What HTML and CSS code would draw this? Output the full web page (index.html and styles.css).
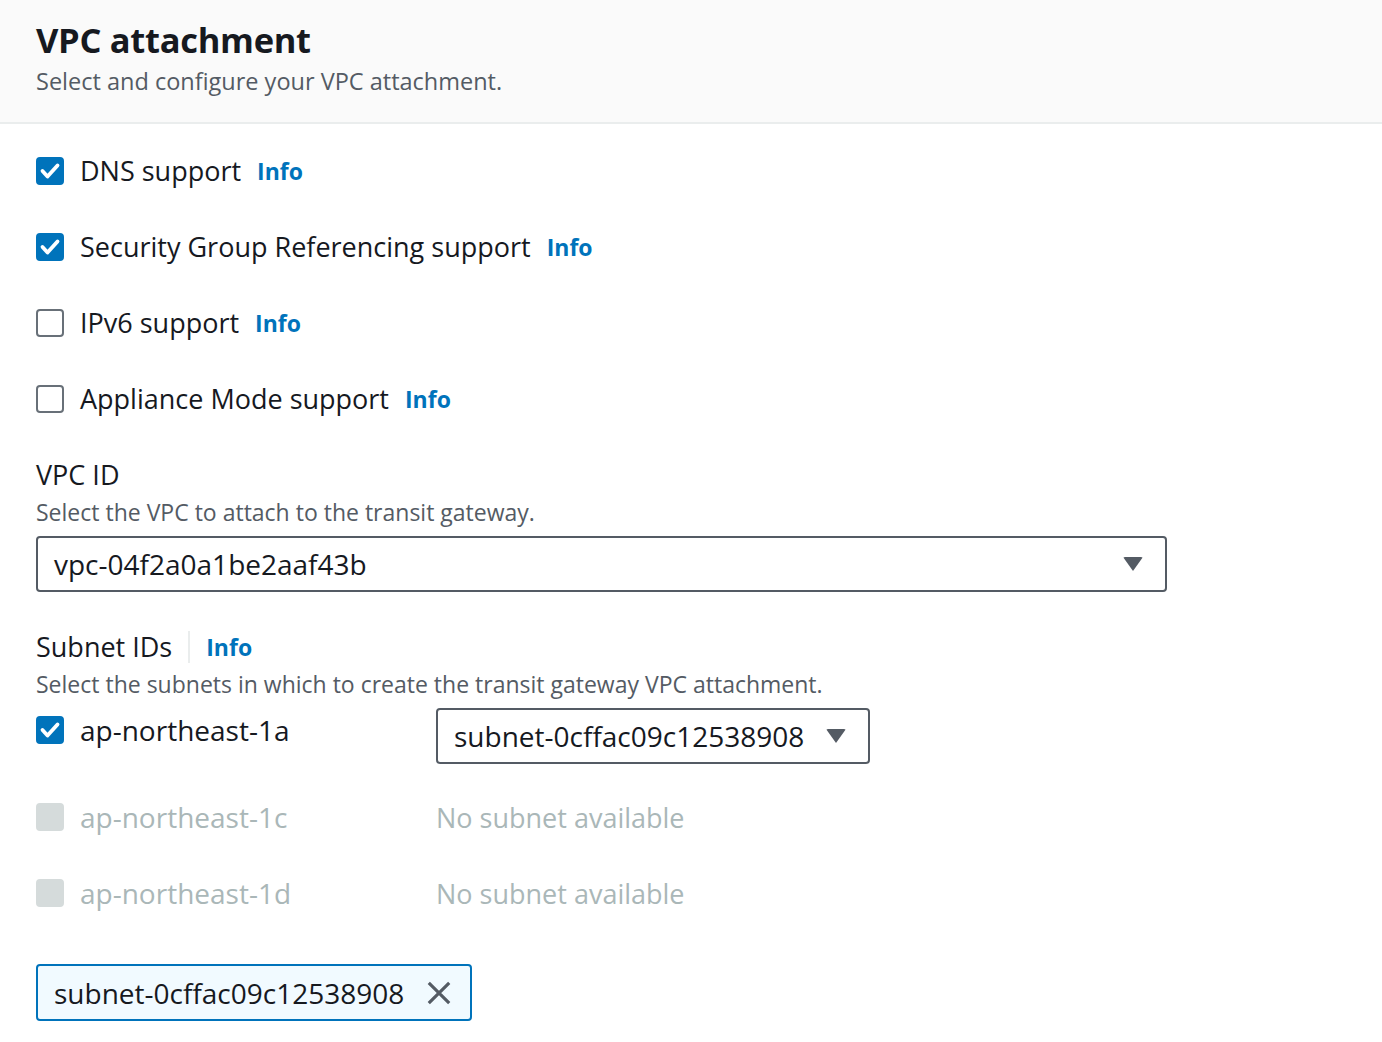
FILE: index.html
```html
<!DOCTYPE html>
<html>
<head>
<meta charset="utf-8">
<link rel="stylesheet" href="styles.css">
</head>
<body>
<div class="panel">
  <div class="header">
    <h1 class="title">VPC attachment</h1>
    <p class="subtitle">Select and configure your VPC attachment.</p>
  </div>
  <div class="content">
    <div class="checks">
      <div class="check-row"><span class="cb checked"><svg viewBox="0 0 28 28"><path d="M6.5 14l5 5.5 10-11" /></svg></span><span class="lbl">DNS support</span><a class="info">Info</a></div>
      <div class="check-row"><span class="cb checked"><svg viewBox="0 0 28 28"><path d="M6.5 14l5 5.5 10-11" /></svg></span><span class="lbl">Security Group Referencing support</span><a class="info">Info</a></div>
      <div class="check-row"><span class="cb"></span><span class="lbl">IPv6 support</span><a class="info">Info</a></div>
      <div class="check-row"><span class="cb"></span><span class="lbl">Appliance Mode support</span><a class="info">Info</a></div>
    </div>

    <div class="field">
      <div class="field-label">VPC ID</div>
      <div class="field-desc">Select the VPC to attach to the transit gateway.</div>
      <div class="select wide"><span>vpc-04f2a0a1be2aaf43b</span><span class="caret"></span></div>
    </div>

    <div class="field subnets">
      <div class="field-label">Subnet IDs<span class="sep"></span><a class="info">Info</a></div>
      <div class="field-desc">Select the subnets in which to create the transit gateway VPC attachment.</div>
      <div class="az-row first">
        <div class="az"><span class="cb checked"><svg viewBox="0 0 28 28"><path d="M6.5 14l5 5.5 10-11" /></svg></span><span class="lbl id">ap-northeast-1a</span></div>
        <div class="select narrow"><span>subnet-0cffac09c12538908</span><span class="caret"></span></div>
      </div>
      <div class="az-row">
        <div class="az disabled"><span class="cb off"></span><span class="lbl id">ap-northeast-1c</span></div>
        <div class="none">No subnet available</div>
      </div>
      <div class="az-row">
        <div class="az disabled"><span class="cb off"></span><span class="lbl id">ap-northeast-1d</span></div>
        <div class="none">No subnet available</div>
      </div>
      <div class="token"><span>subnet-0cffac09c12538908</span><svg class="x" viewBox="0 0 28 28"><path d="M3 3L25 25M25 3L3 25"/></svg></div>
    </div>
  </div>
</div>
</body>
</html>
```

FILE: styles.css
```css
html, body {
  margin: 0;
  padding: 0;
  background: #ffffff;
}
body {
  font-family: "Open Sans", "Noto Sans", sans-serif;
  color: #16191f;
  width: 1382px;
  height: 1042px;
  overflow: hidden;
}
.panel {
  display: flex;
  flex-direction: column;
}
.header {
  background: #fafafa;
  border-bottom: 2px solid #eaeded;
  padding: 18px 36px 0 36px;
  height: 104px;
  box-sizing: content-box;
}
.title {
  margin: 0;
  font-size: 34.5px;
  line-height: 44px;
  font-weight: 700;
  color: #16191f;
  letter-spacing: -0.3px;
}
.subtitle {
  margin: 3px 0 0 0;
  font-size: 23.5px;
  line-height: 32px;
  color: #545b64;
}
.content {
  padding: 0 36px;
}
.checks {
  display: flex;
  flex-direction: column;
  padding-top: 33px;
}
.check-row {
  display: flex;
  align-items: center;
  height: 28px;
  margin-bottom: 48px;
}
.cb {
  width: 28px;
  height: 28px;
  box-sizing: border-box;
  border: 2px solid #687078;
  border-radius: 4px;
  flex: none;
  display: flex;
  align-items: center;
  justify-content: center;
  background: #fff;
}
.cb.checked {
  background: #0073bb;
  border-color: #0073bb;
}
.cb.off {
  background: #d5dbdb;
  border-color: #d5dbdb;
}
.cb svg {
  width: 28px;
  height: 28px;
  flex: none;
}
.cb svg path {
  fill: none;
  stroke: #fff;
  stroke-width: 3.8;
  stroke-linecap: round;
  stroke-linejoin: round;
}
.lbl {
  margin-left: 16px;
  font-size: 27px;
  line-height: 32px;
  color: #16191f;
}
.lbl.id {
  font-size: 28px;
}
.info {
  margin-left: 16px;
  font-size: 23px;
  font-weight: 700;
  color: #0073bb;
  line-height: 32px;
}
.field {
  display: flex;
  flex-direction: column;
}
.field-label {
  font-size: 27px;
  line-height: 34px;
  color: #16191f;
  display: flex;
  align-items: center;
  margin-top: -3px;
}
.field-desc {
  font-size: 23px;
  line-height: 34px;
  color: #545b64;
  margin-top: 3px;
  margin-bottom: 7px;
}
.select {
  border: 2px solid #545b64;
  border-radius: 4px;
  height: 56px;
  box-sizing: border-box;
  display: flex;
  align-items: center;
  justify-content: space-between;
  padding: 0 22px 0 16px;
  font-size: 28px;
  color: #16191f;
}
.select.wide {
  width: 1131px;
}
.select.narrow {
  width: 434px;
}
.caret {
  width: 0;
  height: 0;
  border-left: 10px solid transparent;
  border-right: 10px solid transparent;
  border-top: 14px solid #545b64;
  border-radius: 2px;
}
.subnets {
  margin-top: 41px;
}
.sep {
  display: inline-block;
  width: 2px;
  height: 32px;
  background: #eaeded;
  margin-left: 16px;
}
.subnets .info {
  margin-left: 16px;
}
.az-row {
  display: flex;
  align-items: center;
  height: 76px;
}
.az-row.first {
  height: 58px;
  align-items: flex-start;
  margin-bottom: 13px;
}
.az-row.first .az {
  margin-top: 6px;
}
.az {
  display: flex;
  align-items: center;
  width: 400px;
}
.az .lbl {
  margin-left: 16px;
}
.az.disabled .lbl {
  color: #aab7b8;
}
.none {
  font-size: 27px;
  color: #aab7b8;
}
.token {
  margin-top: 33px;
  width: 436px;
  height: 57px;
  box-sizing: border-box;
  border: 2px solid #0073bb;
  border-radius: 4px;
  background: #f1faff;
  display: flex;
  align-items: center;
  justify-content: space-between;
  padding: 0 18px 0 16px;
  font-size: 28px;
  color: #16191f;
}
.token .x {
  width: 26px;
  height: 26px;
}
.token .x path {
  stroke: #545b64;
  stroke-width: 3.4;
  fill: none;
}
```
